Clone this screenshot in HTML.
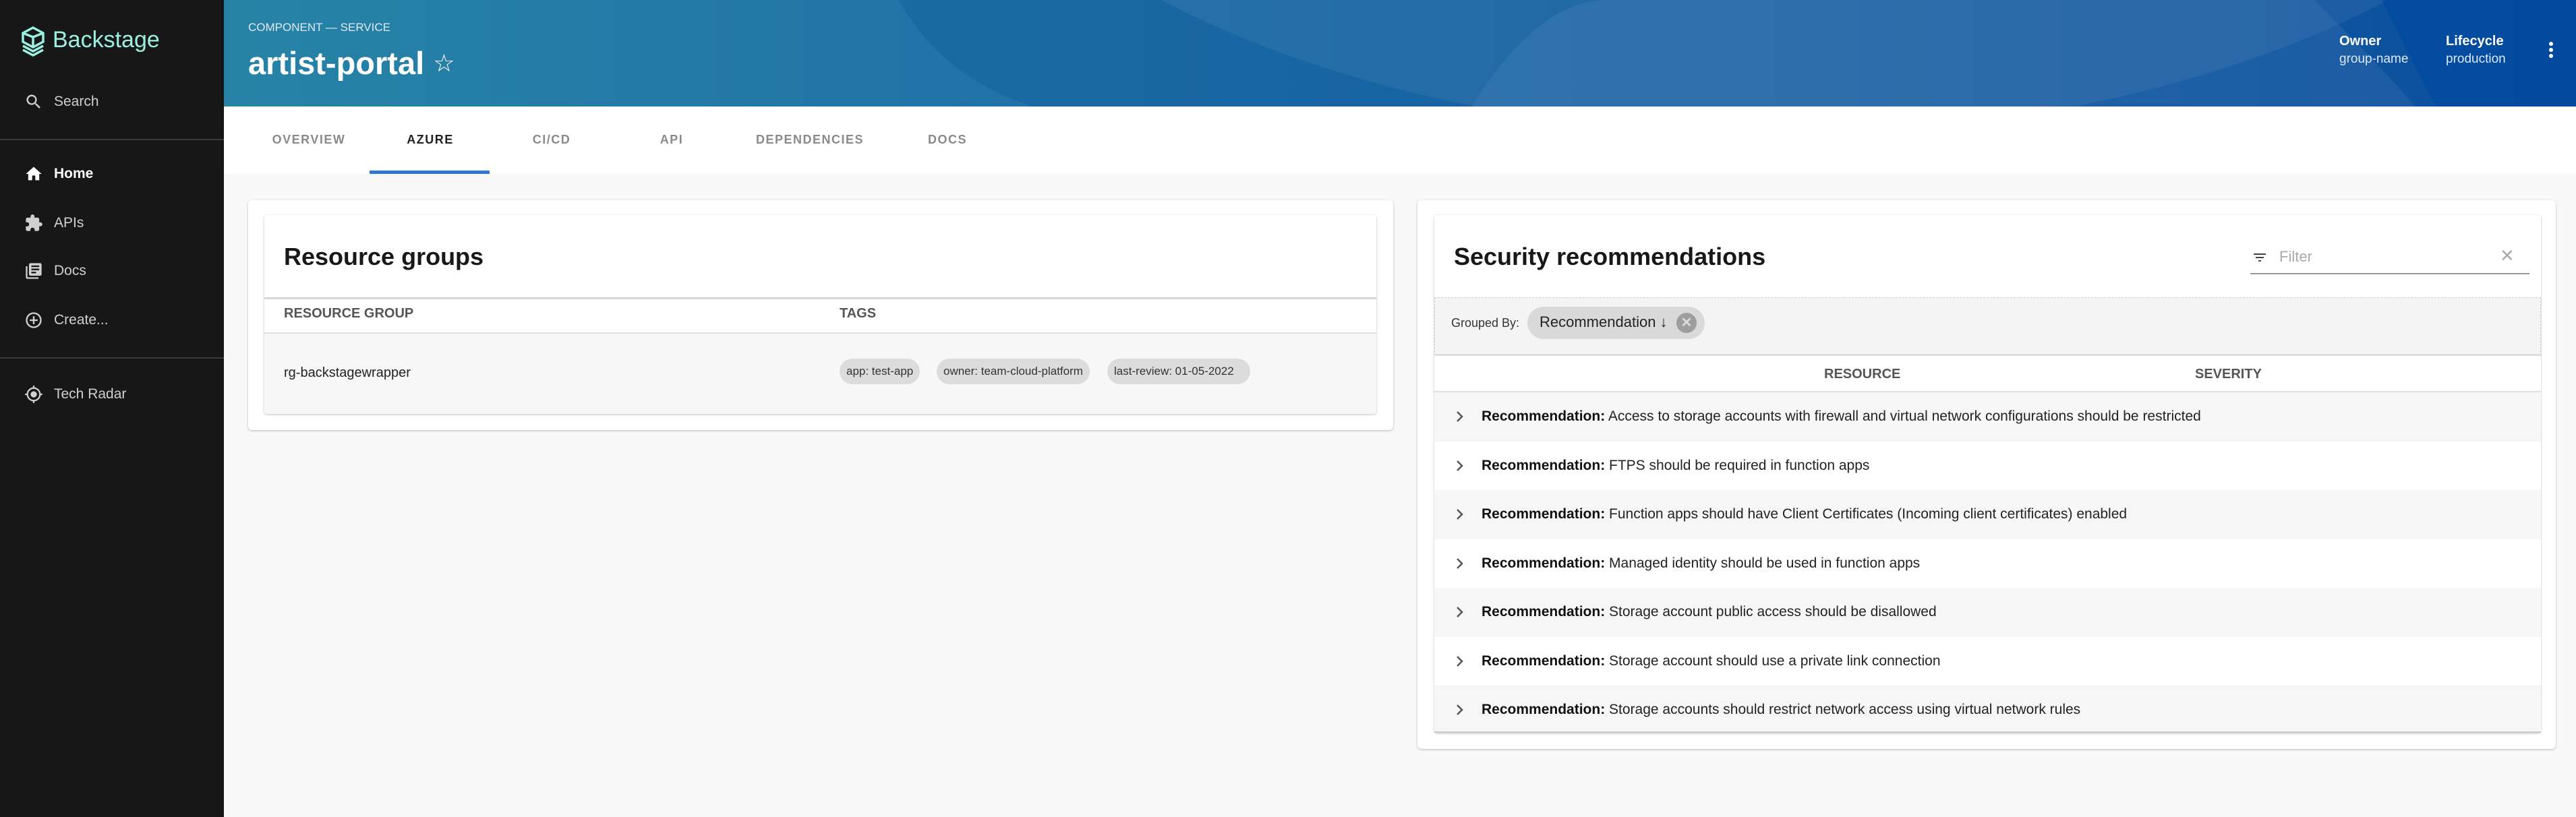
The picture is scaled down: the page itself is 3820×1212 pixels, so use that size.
<!DOCTYPE html>
<html><head><meta charset="utf-8">
<style>
*{box-sizing:border-box;margin:0;padding:0}
body{width:3820px;height:1212px;overflow:hidden;background:#f8f8f8;font-family:"Liberation Sans",Arial,sans-serif;position:relative}
.abs{position:absolute}
#side{left:0;top:0;width:332px;height:1212px;background:#171717}
.nav{position:absolute;left:36px;font-size:21px;color:#d0d0d0;display:flex;align-items:center}
.nav svg{width:28px;height:28px;margin-right:16px;fill:#d0d0d0}
.nav.b{color:#fff;font-weight:bold}
.div{position:absolute;left:0;width:332px;height:2px;background:#3a3a3a}
#hdr{left:332px;top:0;width:3488px;height:158px;overflow:hidden;box-shadow:0 3px 8px rgba(0,0,0,.3)}
#tabs{left:332px;top:158px;width:3488px;height:100px;background:#fff}
.tab{position:absolute;top:197px;font-size:18px;letter-spacing:1.5px;color:#8a8a8a;font-weight:bold;transform:translateX(-50%)}
.card{position:absolute;background:#fff;border-radius:6px;box-shadow:0 1px 3px rgba(0,0,0,.25)}
.h{position:absolute;font-size:36px;font-weight:bold;color:#181818}
.th{position:absolute;font-size:20px;font-weight:bold;color:#555}
.chip{position:absolute;height:38px;line-height:38px;background:#dcdcdc;border-radius:19px;font-size:17px;color:#333;padding:0 10px}
.row{position:absolute;left:2127px;width:1641px;height:72.5px;font-size:21px;color:#222;line-height:72.5px}
.row b{margin-left:70px;color:#111}
.row .ch{position:absolute;left:32px;top:27px;width:12px;height:18px}
</style></head><body>
<div id="side" class="abs">
  <svg class="abs" style="left:30px;top:38px" width="38" height="48" viewBox="0 0 38 48">
    <g fill="none" stroke="#9BF0E1" stroke-width="3.5">
      <path d="M19 3 L34 11 L34 24 L19 32 L4 24 L4 11 Z"/>
      <path d="M4 30 L19 38 L34 30"/><path d="M4 36 L19 44 L34 36"/>
      <path d="M19 17 L34 11 M19 17 L4 11 M19 17 V32"/>
    </g>
  </svg>
  <div class="abs" style="left:78px;top:40px;font-size:34px;color:#9BF0E1">Backstage</div>
  <div class="nav" style="top:137px"><svg viewBox="0 0 24 24"><path d="M15.5 14h-.8l-.3-.3A6.5 6.5 0 1 0 9.5 16a6.5 6.5 0 0 0 4.2-1.6l.3.3v.8l5 5 1.5-1.5-5-5zm-6 0A4.5 4.5 0 1 1 14 9.5 4.5 4.5 0 0 1 9.5 14z"/></svg>Search</div>
  <div class="div" style="top:206px"></div>
  <div class="nav b" style="top:244px"><svg viewBox="0 0 24 24" style="fill:#fff"><path d="M10 20v-6h4v6h5v-8h3L12 3 2 12h3v8z"/></svg>Home</div>
  <div class="nav" style="top:317px"><svg viewBox="0 0 24 24"><path d="M20.5 11H19V7a2 2 0 0 0-2-2h-4V3.5a2.5 2.5 0 0 0-5 0V5H4a2 2 0 0 0-2 2v3.8h1.5a2.7 2.7 0 0 1 0 5.4H2V20a2 2 0 0 0 2 2h3.8v-1.5a2.7 2.7 0 0 1 5.4 0V22H17a2 2 0 0 0 2-2v-4h1.5a2.5 2.5 0 0 0 0-5z"/></svg>APIs</div>
  <div class="nav" style="top:388px"><svg viewBox="0 0 24 24"><path d="M4 6H2v14a2 2 0 0 0 2 2h14v-2H4V6zm16-4H8a2 2 0 0 0-2 2v12a2 2 0 0 0 2 2h12a2 2 0 0 0 2-2V4a2 2 0 0 0-2-2zm-1 9H9V9h10v2zm-4 4H9v-2h6v2zm4-8H9V5h10v2z"/></svg>Docs</div>
  <div class="nav" style="top:461px"><svg viewBox="0 0 24 24"><path d="M13 7h-2v4H7v2h4v4h2v-4h4v-2h-4V7zm-1-5a10 10 0 1 0 0 20 10 10 0 0 0 0-20zm0 18a8 8 0 1 1 0-16 8 8 0 0 1 0 16z"/></svg>Create...</div>
  <div class="div" style="top:530px"></div>
  <div class="nav" style="top:571px"><svg viewBox="0 0 24 24"><path d="M12 8a4 4 0 1 0 0 8 4 4 0 0 0 0-8zm8.9 3A9 9 0 0 0 13 3.1V1h-2v2.1A9 9 0 0 0 3.1 11H1v2h2.1a9 9 0 0 0 7.9 7.9V23h2v-2.1a9 9 0 0 0 7.9-7.9H23v-2h-2.1zM12 19a7 7 0 1 1 0-14 7 7 0 0 1 0 14z"/></svg>Tech Radar</div>
</div>

<div id="hdr" class="abs">
  <svg width="3488" height="158" style="position:absolute;left:0;top:0">
    <defs><linearGradient id="g" x1="0" x2="1"><stop offset="0" stop-color="#2783a6"/><stop offset=".5" stop-color="#1d6aa8"/><stop offset="1" stop-color="#0a4aa0"/></linearGradient></defs>
    <rect width="3488" height="158" fill="url(#g)"/>
    <path d="M1000 0 C1150 260 1500 158 1500 158 L3488 158 L3488 0 Z" fill="#0e5a9a" opacity=".35"/>
    <ellipse cx="2300" cy="-500" rx="1300" ry="700" fill="#fff" opacity=".06"/>
    <path d="M1850 158 Q1950 0 2050 0 L3100 0 Q3200 100 3250 158 Z" fill="#fff" opacity=".06"/>
    <path d="M3200 0 L3488 0 L3488 158 L3280 158 Z" fill="#0048a0" opacity=".7"/>
  </svg>
  <div class="abs" style="left:36px;top:31px;font-size:17px;color:#dfeaf1">COMPONENT — SERVICE</div>
  <div class="abs" style="left:36px;top:66px;font-size:47px;font-weight:bold;color:#fff">artist-portal <span style="font-weight:normal;font-size:36px;vertical-align:4px">☆</span></div>
  <div class="abs" style="left:3137px;top:50px;font-size:20px;font-weight:bold;color:#fff">Owner</div>
  <div class="abs" style="left:3137px;top:77px;font-size:19px;color:#e0e8f2">group-name</div>
  <div class="abs" style="left:3295px;top:50px;font-size:20px;font-weight:bold;color:#fff">Lifecycle</div>
  <div class="abs" style="left:3295px;top:77px;font-size:19px;color:#e0e8f2">production</div>
  <svg class="abs" style="left:3440px;top:60px" width="22" height="30" viewBox="0 0 22 30"><circle cx="11" cy="5" r="3" fill="#fff"/><circle cx="11" cy="14" r="3" fill="#fff"/><circle cx="11" cy="23" r="3" fill="#fff"/></svg>
</div>

<div id="tabs" class="abs"></div>
<div class="tab" style="left:458px">OVERVIEW</div>
<div class="tab" style="left:638px;color:#222">AZURE</div>
<div class="tab" style="left:818px">CI/CD</div>
<div class="tab" style="left:996px">API</div>
<div class="tab" style="left:1201px">DEPENDENCIES</div>
<div class="tab" style="left:1405px">DOCS</div>
<div class="abs" style="left:548px;top:253px;width:178px;height:5px;background:#2e77d0"></div>

<div class="card" style="left:368px;top:297px;width:1698px;height:341px"></div>
<div class="card" style="left:392px;top:319px;width:1649px;height:295px;border-radius:4px;overflow:hidden">
  <div class="abs" style="left:0;top:122px;width:100%;height:3px;background:#d5d5d5"></div>
  <div class="abs" style="left:0;top:174px;width:100%;height:2px;background:#e0e0e0"></div>
  <div class="abs" style="left:0;top:176px;width:100%;height:119px;background:#f7f7f7"></div>
</div>
<div class="h" style="left:421px;top:360px">Resource groups</div>
<div class="th" style="left:421px;top:454px">RESOURCE GROUP</div>
<div class="th" style="left:1245px;top:454px">TAGS</div>
<div class="abs" style="left:421px;top:542px;font-size:20px;color:#222">rg-backstagewrapper</div>
<div class="chip" style="left:1245px;top:532px">app: test-app</div>
<div class="chip" style="left:1389px;top:532px">owner: team-cloud-platform</div>
<div class="chip" style="left:1642px;top:532px;width:212px">last-review: 01-05-2022</div>

<div class="card" style="left:2102px;top:297px;width:1688px;height:814px"></div>
<div class="card" style="left:2127px;top:319px;width:1641px;height:768px;border-radius:4px;overflow:hidden"></div>
<div class="h" style="left:2156px;top:360px">Security recommendations</div>
<svg class="abs" style="left:3338px;top:370px" width="26" height="24" viewBox="0 0 24 24"><path d="M10 18h4v-2h-4v2zM3 6v2h18V6H3zm3 7h12v-2H6v2z" fill="#444"/></svg>
<div class="abs" style="left:3380px;top:368px;font-size:22px;color:#aaa">Filter</div>
<div class="abs" style="left:3707px;top:364px;font-size:26px;color:#aaa">✕</div>
<div class="abs" style="left:3337px;top:405px;width:414px;height:2px;background:#999"></div>
<div class="abs" style="left:2127px;top:441px;width:1641px;height:87px;background:#f4f4f4;border:1px dashed #ccc;border-bottom:3px solid #ddd"></div>
<div class="abs" style="left:2152px;top:469px;font-size:18px;color:#333">Grouped By:</div>
<div class="abs" style="left:2265px;top:455px;width:263px;height:48px;border-radius:24px;background:#d9d9d9"></div>
<div class="abs" style="left:2283px;top:465px;font-size:22px;color:#222">Recommendation ↓</div>
<div class="abs" style="left:2486px;top:464px;width:30px;height:30px;border-radius:50%;background:#9e9e9e;color:#ddd;font-size:20px;line-height:30px;text-align:center;font-weight:bold">✕</div>
<div class="th" style="left:2705px;top:544px">RESOURCE</div>
<div class="th" style="left:3255px;top:544px">SEVERITY</div>
<div class="abs" style="left:2127px;top:580px;width:1641px;height:2px;background:#e0e0e0"></div>
<div class="row" style="top:582px;background:#f6f6f6"><svg class="ch" viewBox="0 0 12 18"><path d="M2 2l7 7-7 7" fill="none" stroke="#555" stroke-width="2.5"/></svg><b>Recommendation:</b> Access to storage accounts with firewall and virtual network configurations should be restricted</div>
<div class="row" style="top:654.5px;background:#fff"><svg class="ch" viewBox="0 0 12 18"><path d="M2 2l7 7-7 7" fill="none" stroke="#555" stroke-width="2.5"/></svg><b>Recommendation:</b> FTPS should be required in function apps</div>
<div class="row" style="top:727px;background:#f6f6f6"><svg class="ch" viewBox="0 0 12 18"><path d="M2 2l7 7-7 7" fill="none" stroke="#555" stroke-width="2.5"/></svg><b>Recommendation:</b> Function apps should have Client Certificates (Incoming client certificates) enabled</div>
<div class="row" style="top:799.5px;background:#fff"><svg class="ch" viewBox="0 0 12 18"><path d="M2 2l7 7-7 7" fill="none" stroke="#555" stroke-width="2.5"/></svg><b>Recommendation:</b> Managed identity should be used in function apps</div>
<div class="row" style="top:872px;background:#f6f6f6"><svg class="ch" viewBox="0 0 12 18"><path d="M2 2l7 7-7 7" fill="none" stroke="#555" stroke-width="2.5"/></svg><b>Recommendation:</b> Storage account public access should be disallowed</div>
<div class="row" style="top:944.5px;background:#fff"><svg class="ch" viewBox="0 0 12 18"><path d="M2 2l7 7-7 7" fill="none" stroke="#555" stroke-width="2.5"/></svg><b>Recommendation:</b> Storage account should use a private link connection</div>
<div class="row" style="top:1017px;height:70px;background:#f6f6f6;border-bottom:2px solid #ccc"><svg class="ch" viewBox="0 0 12 18"><path d="M2 2l7 7-7 7" fill="none" stroke="#555" stroke-width="2.5"/></svg><b>Recommendation:</b> Storage accounts should restrict network access using virtual network rules</div>
</body></html>
